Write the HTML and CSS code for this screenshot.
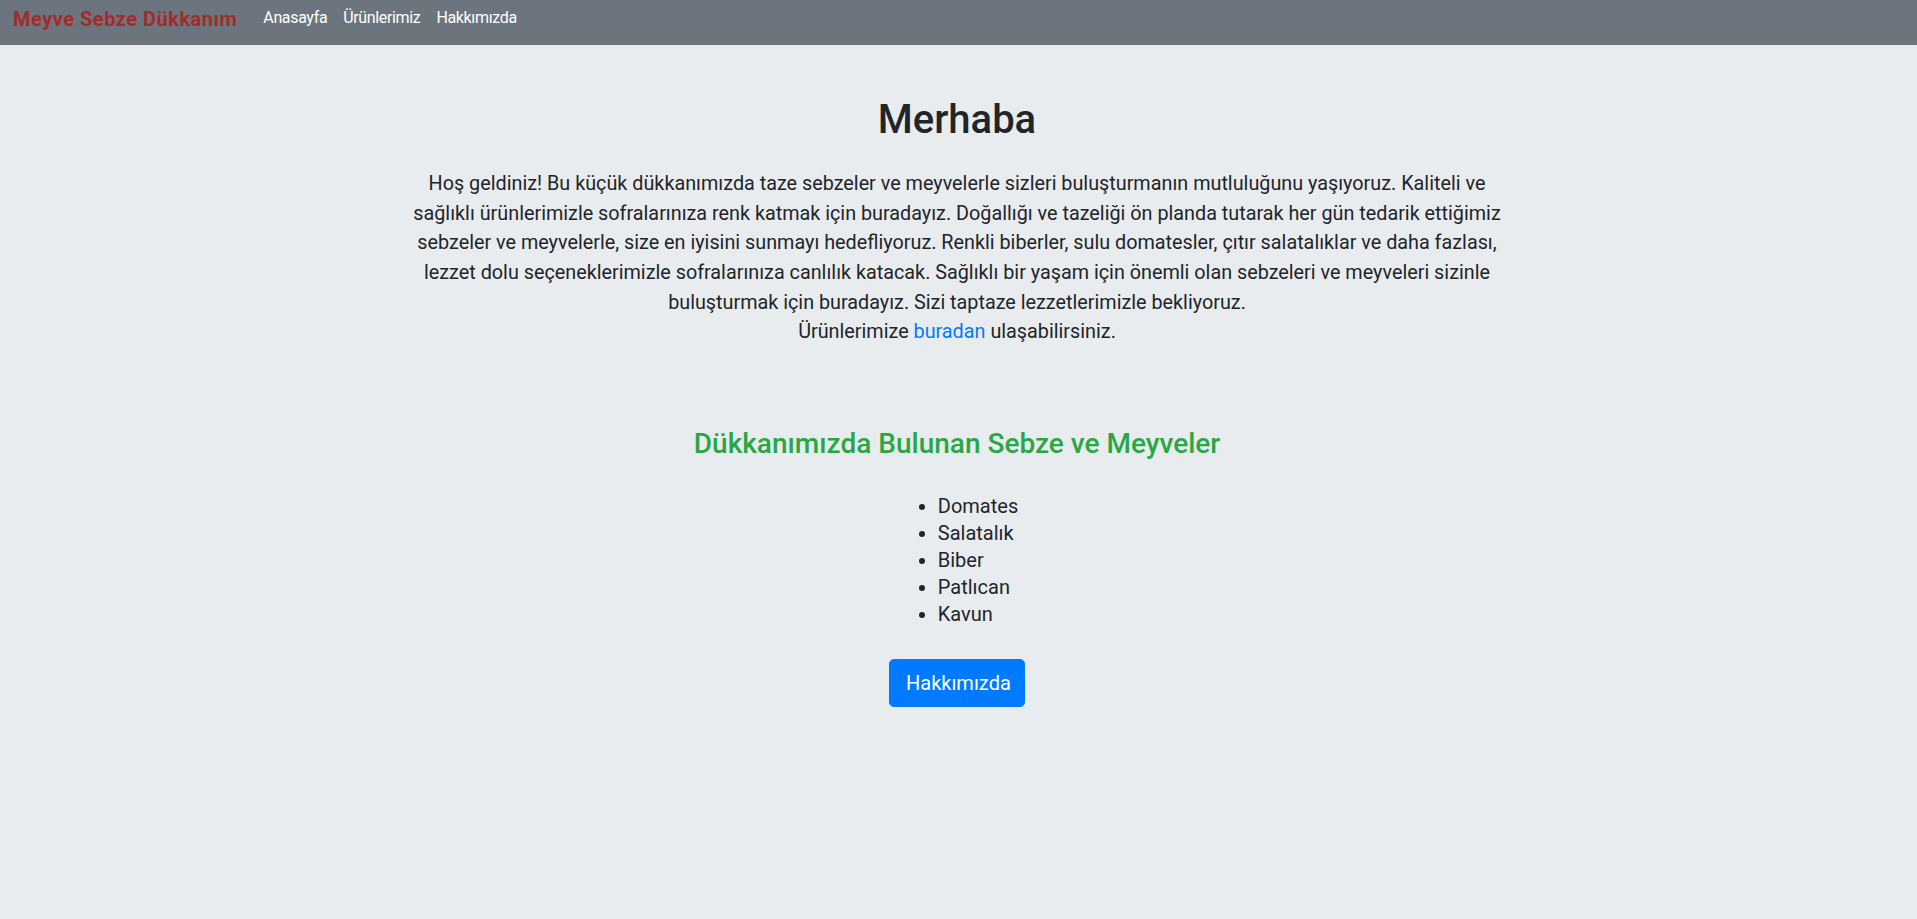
FILE: index.html
```html
<!DOCTYPE html>
<html lang="tr">
<head>
<meta charset="utf-8">
<title>Meyve Sebze Dükkanım</title>
<link rel="stylesheet" href="styles.css">
</head>
<body>
<nav class="navbar">
  <a class="brand" href="#">Meyve Sebze Dükkanım</a>
  <ul class="nav-links">
    <li><a href="#">Anasayfa</a></li>
    <li><a href="#">Ürünlerimiz</a></li>
    <li><a href="#">Hakkımızda</a></li>
  </ul>
</nav>
<main class="hero">
  <div class="container">
    <h1 class="title">Merhaba</h1>
    <p class="intro">Hoş geldiniz! Bu küçük dükkanımızda taze sebzeler ve meyvelerle sizleri buluşturmanın mutluluğunu yaşıyoruz. Kaliteli ve sağlıklı ürünlerimizle sofralarınıza renk katmak için buradayız. Doğallığı ve tazeliği ön planda tutarak her gün tedarik ettiğimiz sebzeler ve meyvelerle, size en iyisini sunmayı hedefliyoruz. Renkli biberler, sulu domatesler, çıtır salatalıklar ve daha fazlası, lezzet dolu seçeneklerimizle sofralarınıza canlılık katacak. Sağlıklı bir yaşam için önemli olan sebzeleri ve meyveleri sizinle buluşturmak için buradayız. Sizi taptaze lezzetlerimizle bekliyoruz.<br>Ürünlerimize <a href="#">buradan</a> ulaşabilirsiniz.</p>
    <h3 class="subtitle">Dükkanımızda Bulunan Sebze ve Meyveler</h3>
    <ul class="products">
      <li>Domates</li>
      <li>Salatalık</li>
      <li>Biber</li>
      <li>Patlıcan</li>
      <li>Kavun</li>
    </ul>
    <div class="actions">
      <a class="btn" href="#">Hakkımızda</a>
    </div>
  </div>
</main>
</body>
</html>
```
FILE: styles.css
```css
* { box-sizing: border-box; }
html, body { margin: 0; padding: 0; }
body {
  font-family: Roboto, "Liberation Sans", sans-serif;
  color: #212529;
  background: #e9ecef;
  min-height: 919px;
}
a { text-decoration: none; }

.navbar {
  display: flex;
  align-items: flex-start;
  height: 45px;
  padding: 0 13px;
  background: #6c757d;
}
.brand {
  margin-top: 4px;
  margin-right: 18px;
  font-size: 20px;
  line-height: 30px;
  font-weight: 700;
  letter-spacing: 0.5px;
  color: #a52a2a;
}
.nav-links {
  display: flex;
  list-style: none;
  margin: 6px 0 0;
  padding: 0;
}
.nav-links a {
  display: block;
  padding: 0 8px;
  font-size: 16px;
  line-height: 24px;
  letter-spacing: -0.35px;
  color: #fff;
}

.hero { padding: 51px 3px 0 0; }
.container {
  width: 1110px;
  margin: 0 auto;
  text-align: center;
}
.title {
  margin: 0 0 25px;
  font-size: 40px;
  line-height: 48px;
  font-weight: 500;
}
.intro {
  margin: 0 0 80px;
  font-size: 19.8px;
  line-height: 29.65px;
}
.intro a { color: #007bff; }
.subtitle {
  margin: 0 0 32px;
  font-size: 28px;
  line-height: 33.6px;
  font-weight: 500;
  color: #28a745;
}
.products {
  display: inline-block;
  margin: 0 0 31px;
  padding-left: 42px;
  text-align: left;
  font-size: 20px;
  line-height: 27px;
}
.actions { display: flex; justify-content: center; }
.btn {
  display: inline-block;
  width: 136px;
  height: 48px;
  padding: 8px 16px;
  font-size: 20px;
  line-height: 30px;
  text-align: center;
  color: #fff;
  background: #007bff;
  border: 1px solid #007bff;
  border-radius: 4.8px;
}
```
